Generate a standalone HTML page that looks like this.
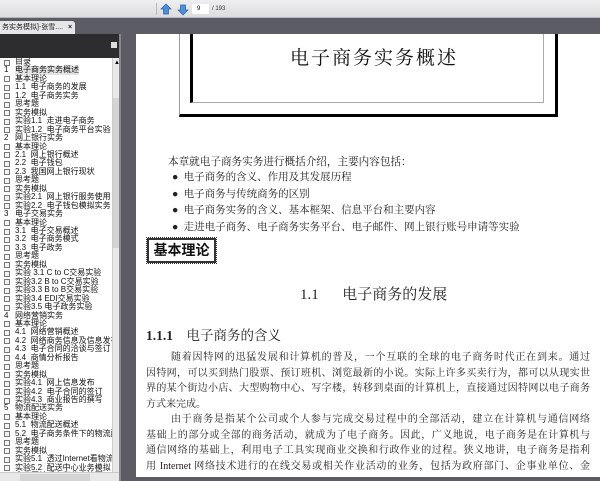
<!DOCTYPE html>
<html><head><meta charset="utf-8"><style>
*{margin:0;padding:0;box-sizing:border-box}
body{width:600px;height:481px;overflow:hidden;background:#5b5c64;position:relative;font-family:"Liberation Serif","Noto Serif CJK SC",serif}
.abs{position:absolute}
#tb{left:0;top:0;width:600px;height:18px;background:linear-gradient(#efeff1,#dcdce0);border-bottom:1px solid #b8b8c0}
#tab{left:0;top:21px;width:75px;height:13px;background:#e6e6e8;font:7px "Liberation Sans","Noto Sans CJK SC",sans-serif;line-height:13px;color:#222;white-space:nowrap;overflow:hidden;border-radius:0 3px 0 0}
#sh{left:0;top:34px;width:121px;height:24px;background:#2d2d2f}
#tree{left:0;top:58px;width:112px;height:423px;background:#fff;overflow:hidden;font:8px "Liberation Sans","Noto Sans CJK SC",sans-serif;color:#111}
.it{position:absolute;left:0;height:8.45px;line-height:8.45px;white-space:nowrap}
.ic{position:absolute;left:4px;top:1.5px;width:6px;height:6px;border:1px solid #777;background:#f4f4f4}
.tx{position:absolute;left:15px}
.n{position:absolute;left:4px}
#vs{left:112px;top:58px;width:8px;height:414px;background:#e8e8e8;border-left:1px solid #ccc}
#hs{left:0;top:472px;width:120px;height:9px;background:#e8e8e8;border-top:1px solid #ccc}
#page{left:136px;top:34px;width:464px;height:443px;background:#fff;overflow:hidden}
.t{position:absolute;white-space:nowrap;color:#222}
.ln{position:absolute;left:10px;width:444px;font-size:10px;line-height:15px;text-align:justify;text-align-last:justify;white-space:nowrap;color:#222;overflow:hidden}
</style></head><body>
<div id="tb" class="abs">
 <div class="abs" style="left:156px;top:3px;width:1px;height:12px;background:#bbb"></div>
 <svg class="abs" style="left:160px;top:3px" width="30" height="13"><path d="M6 1 L11 6 L8.5 6 L8.5 11 L3.5 11 L3.5 6 L1 6Z" fill="#4f8fd8" stroke="#2a62a8" stroke-width=".7"/><path d="M23 12 L28 7 L25.5 7 L25.5 2 L20.5 2 L20.5 7 L18 7Z" fill="#4f8fd8" stroke="#2a62a8" stroke-width=".7"/></svg>
 <div class="abs" style="left:192px;top:4px;width:17px;height:10px;background:#fff;font:6px 'Liberation Sans';line-height:10px;padding-left:5px">9</div>
 <div class="abs" style="left:212px;top:4px;font:6px 'Liberation Sans';line-height:10px;color:#333">/ 193</div>
</div>
<div id="tab" class="abs">&nbsp;务实务模拟]-张雪.... <b style="margin-left:3px">×</b></div>
<div id="sh" class="abs"><div class="abs" style="left:111px;top:8px;width:6px;height:6px;background:#ddd"></div></div>
<div id="tree" class="abs">
<div class="it" style="top:0"><span class="ic"></span><span class="tx">目录</span></div>
<div class="it" style="top:8.45px"><span class="n">1</span><span class="tx" style="background:#e4e4e4">电子商务实务概述</span></div>
<div class="it" style="top:16.9px"><span class="ic"></span><span class="tx">基本理论</span></div>
<div class="it" style="top:25.35px"><span class="ic"></span><span class="tx">1.1&nbsp; 电子商务的发展</span></div>
<div class="it" style="top:33.8px"><span class="ic"></span><span class="tx">1.2&nbsp; 电子商务实务</span></div>
<div class="it" style="top:42.25px"><span class="ic"></span><span class="tx">思考题</span></div>
<div class="it" style="top:50.7px"><span class="ic"></span><span class="tx">实务模拟</span></div>
<div class="it" style="top:59.15px"><span class="ic"></span><span class="tx">实验1.1&nbsp; 走进电子商务</span></div>
<div class="it" style="top:67.6px"><span class="ic"></span><span class="tx">实验1.2&nbsp; 电子商务平台实验</span></div>
<div class="it" style="top:76.05px"><span class="n">2</span><span class="tx">网上银行实务</span></div>
<div class="it" style="top:84.5px"><span class="ic"></span><span class="tx">基本理论</span></div>
<div class="it" style="top:92.95px"><span class="ic"></span><span class="tx">2.1&nbsp; 网上银行概述</span></div>
<div class="it" style="top:101.4px"><span class="ic"></span><span class="tx">2.2&nbsp; 电子钱包</span></div>
<div class="it" style="top:109.85px"><span class="ic"></span><span class="tx">2.3&nbsp; 我国网上银行现状</span></div>
<div class="it" style="top:118.3px"><span class="ic"></span><span class="tx">思考题</span></div>
<div class="it" style="top:126.75px"><span class="ic"></span><span class="tx">实务模拟</span></div>
<div class="it" style="top:135.2px"><span class="ic"></span><span class="tx">实验2.1&nbsp; 网上银行服务使用</span></div>
<div class="it" style="top:143.65px"><span class="ic"></span><span class="tx">实验2.2&nbsp; 电子钱包模拟实务</span></div>
<div class="it" style="top:152.1px"><span class="n">3</span><span class="tx">电子交易实务</span></div>
<div class="it" style="top:160.55px"><span class="ic"></span><span class="tx">基本理论</span></div>
<div class="it" style="top:169px"><span class="ic"></span><span class="tx">3.1&nbsp; 电子交易概述</span></div>
<div class="it" style="top:177.45px"><span class="ic"></span><span class="tx">3.2&nbsp; 电子商务模式</span></div>
<div class="it" style="top:185.9px"><span class="ic"></span><span class="tx">3.3&nbsp; 电子政务</span></div>
<div class="it" style="top:194.35px"><span class="ic"></span><span class="tx">思考题</span></div>
<div class="it" style="top:202.8px"><span class="ic"></span><span class="tx">实务模拟</span></div>
<div class="it" style="top:211.25px"><span class="ic"></span><span class="tx">实验 3.1 C to C交易实验</span></div>
<div class="it" style="top:219.7px"><span class="ic"></span><span class="tx">实验3.2 B to C交易实验</span></div>
<div class="it" style="top:228.15px"><span class="ic"></span><span class="tx">实验3.3 B to B交易实验</span></div>
<div class="it" style="top:236.6px"><span class="ic"></span><span class="tx">实验3.4 EDI交易实验</span></div>
<div class="it" style="top:245.05px"><span class="ic"></span><span class="tx">实验3.5 电子政务实验</span></div>
<div class="it" style="top:253.5px"><span class="n">4</span><span class="tx">网络营销实务</span></div>
<div class="it" style="top:261.95px"><span class="ic"></span><span class="tx">基本理论</span></div>
<div class="it" style="top:270.4px"><span class="ic"></span><span class="tx">4.1&nbsp; 网络营销概述</span></div>
<div class="it" style="top:278.85px"><span class="ic"></span><span class="tx">4.2&nbsp; 网络商务信息及信息发布</span></div>
<div class="it" style="top:287.3px"><span class="ic"></span><span class="tx">4.3&nbsp; 电子合同的洽谈与签订</span></div>
<div class="it" style="top:295.75px"><span class="ic"></span><span class="tx">4.4&nbsp; 商情分析报告</span></div>
<div class="it" style="top:304.2px"><span class="ic"></span><span class="tx">思考题</span></div>
<div class="it" style="top:312.65px"><span class="ic"></span><span class="tx">实务模拟</span></div>
<div class="it" style="top:321.1px"><span class="ic"></span><span class="tx">实验4.1&nbsp; 网上信息发布</span></div>
<div class="it" style="top:329.55px"><span class="ic"></span><span class="tx">实验4.2&nbsp; 电子合同的签订</span></div>
<div class="it" style="top:338px"><span class="ic"></span><span class="tx">实验4.3&nbsp; 商业报告的撰写</span></div>
<div class="it" style="top:346.45px"><span class="n">5</span><span class="tx">物流配送实务</span></div>
<div class="it" style="top:354.9px"><span class="ic"></span><span class="tx">基本理论</span></div>
<div class="it" style="top:363.35px"><span class="ic"></span><span class="tx">5.1&nbsp; 物流配送概述</span></div>
<div class="it" style="top:371.8px"><span class="ic"></span><span class="tx">5.2&nbsp; 电子商务条件下的物流配送</span></div>
<div class="it" style="top:380.25px"><span class="ic"></span><span class="tx">思考题</span></div>
<div class="it" style="top:388.7px"><span class="ic"></span><span class="tx">实务模拟</span></div>
<div class="it" style="top:397.15px"><span class="ic"></span><span class="tx">实验5.1&nbsp; 透过Internet看物流</span></div>
<div class="it" style="top:405.6px"><span class="ic"></span><span class="tx">实验5.2&nbsp; 配送中心业务模拟</span></div>
<div class="it" style="top:414.05px"><span class="n">6</span><span class="tx">企业网站后台和信息管理</span></div>
</div>
<div id="vs" class="abs"><div class="abs" style="left:1px;top:2px;font:6px sans-serif">▲</div><div class="abs" style="left:0;top:40px;width:7px;height:150px;background:#d4d4d4"></div></div>
<div id="hs" class="abs"><div class="abs" style="left:20px;top:1px;width:70px;height:7px;background:#d4d4d4"></div></div>
<div class="abs" style="left:119px;top:34px;width:2px;height:447px;background:#888"></div>
<div id="page" class="abs">
 <div class="abs" style="left:43px;top:0;width:379px;height:83px;border-left:1px solid #999;border-right:3px solid #000;border-bottom:3px solid #000"></div>
 <div class="abs" style="left:54px;top:0;width:354px;height:69px;border-left:3px solid #000;border-right:1px solid #aaa;border-bottom:1px solid #aaa"></div>
 <div class="t" style="left:154px;top:9px;font-size:19px;letter-spacing:2px;color:#111">电子商务实务概述</div>
 <div class="t" style="left:32px;top:120px;font-size:10.6px">本章就电子商务实务进行概括介绍，主要内容包括：</div>
 <div class="t" style="left:36px;top:136px;font-size:10.5px;line-height:16.7px">●&nbsp; 电子商务的含义、作用及其发展历程<br>●&nbsp; 电子商务与传统商务的区别<br>●&nbsp; 电子商务实务的含义、基本框架、信息平台和主要内容<br>●&nbsp; 走进电子商务、电子商务实务平台、电子邮件、网上银行账号申请等实验</div>
 <div class="abs" style="left:11px;top:204px;width:69px;height:25px;border:2px double #333;outline:1px dotted #333;font:bold 14px 'Liberation Sans','Noto Sans CJK SC',sans-serif;line-height:20px;text-align:center;color:#111">基本理论</div>
 <div class="t" style="left:164px;top:249px;font-size:15px;word-spacing:8px">1.1 &nbsp;电子商务的发展</div>
 <div class="t" style="left:10px;top:290px;font-size:13.5px"><b>1.1.1</b>&nbsp;&nbsp;&nbsp; 电子商务的含义</div>
 <div class="ln" style="top:316px;left:35px;width:419px">随着因特网的迅猛发展和计算机的普及，一个互联的全球的电子商务时代正在到来。通过</div>
 <div class="ln" style="top:331.5px">因特网，可以买到热门股票、预订班机、浏览最新的小说。实际上许多买卖行为，都可以从现实世</div>
 <div class="ln" style="top:347px">界的某个街边小店、大型购物中心、写字楼，转移到桌面的计算机上，直接通过因特网以电子商务</div>
 <div class="ln" style="top:362.5px;text-align-last:left">方式来完成。</div>
 <div class="ln" style="top:378px;left:35px;width:419px">由于商务是指某个公司或个人参与完成交易过程中的全部活动，建立在计算机与通信网络</div>
 <div class="ln" style="top:393.5px">基础上的部分或全部的商务活动，就成为了电子商务。因此，广义地说，电子商务是在计算机与</div>
 <div class="ln" style="top:409px">通信网络的基础上，利用电子工具实现商业交换和行政作业的过程。狭义地讲，电子商务是指利</div>
 <div class="ln" style="top:424.5px">用 Internet 网络技术进行的在线交易或相关作业活动的业务，包括为政府部门、企事业单位、金</div>
</div>
</body></html>
